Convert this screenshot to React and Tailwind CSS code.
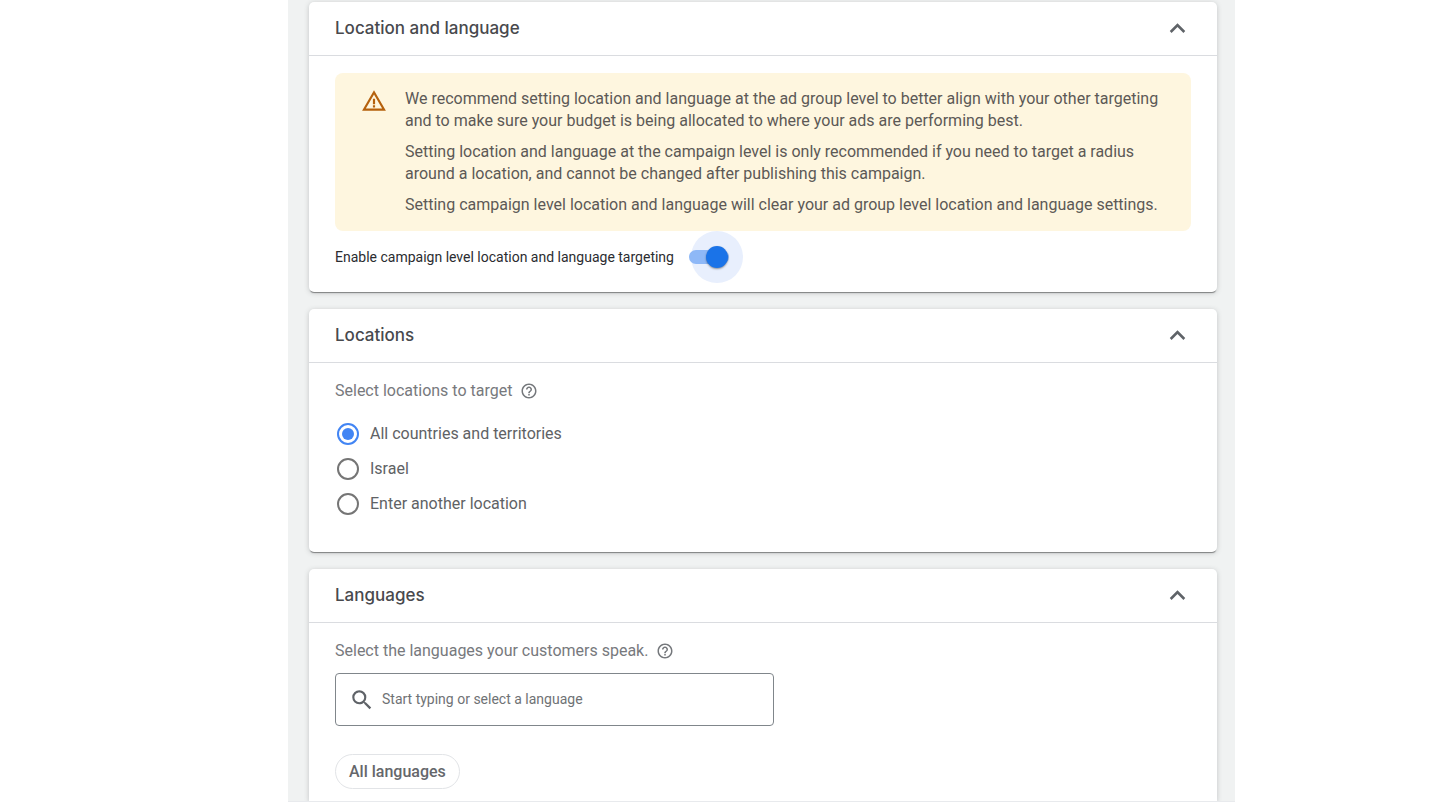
import { useState } from "react";
import { MdHelpOutline, MdKeyboardArrowUp, MdSearch, MdWarningAmber } from "react-icons/md";

const LOCATIONS = [
  { value: "all", label: "All countries and territories" },
  { value: "il", label: "Israel" },
  { value: "other", label: "Enter another location" },
];

function Panel({ title, className = "", children }) {
  const [open, setOpen] = useState(true);

  return (
    <section
      className={`bg-white shadow-[0_2px_1px_-1px_rgba(0,0,0,0.4),0_1px_5px_rgba(60,64,67,0.25)] ${className}`}
    >
      <header className="flex h-[54px] items-center justify-between border-b border-[#dadce0] pr-6 pl-[26px]">
        <h2 className="font-['Inter',sans-serif] text-[17px] font-medium text-[#48494d]">{title}</h2>
        <button type="button" aria-label={`Toggle ${title}`} aria-expanded={open} onClick={() => setOpen(!open)}>
          <MdKeyboardArrowUp className={`size-[31px] text-[#5f6368] ${open ? "" : "rotate-180"}`} />
        </button>
      </header>
      {open && children}
    </section>
  );
}

function HelpButton({ label }) {
  return (
    <button type="button" aria-label={label}>
      <MdHelpOutline className="size-[18px] text-[#75787c]" />
    </button>
  );
}

function TargetingWarning() {
  return (
    <div className="flex gap-[18px] rounded-lg bg-[#fef6df] py-[15px] pr-6 pl-[26px]">
      <MdWarningAmber className="size-[26px] shrink-0 text-[#b5610d]" />
      <div className="space-y-[9px] text-[16px] leading-[22px] text-[#5c5956]">
        <p>
          We recommend setting location and language at the ad group level to better align with your other targeting{" "}
          and to make sure your budget is being allocated to where your ads are performing best.
        </p>
        <p>
          Setting location and language at the campaign level is only recommended if you need to target a radius around
          a location, and cannot be changed after publishing this campaign.
        </p>
        <p>Setting campaign level location and language will clear your ad group level location and language settings.</p>
      </div>
    </div>
  );
}

function TargetingSwitch() {
  const [on, setOn] = useState(true);

  return (
    <label className="flex h-[52px] items-center gap-[15px] text-[14px] text-[#2b2c30]">
      Enable campaign level location and language targeting
      <span className="relative h-[14px] w-10">
        <input
          type="checkbox"
          role="switch"
          checked={on}
          onChange={(e) => setOn(e.target.checked)}
          className="peer absolute inset-0 m-0 cursor-pointer appearance-none"
        />
        {/* halo, track and thumb */}
        <span className="pointer-events-none absolute -top-[19px] left-[2px] size-[52px] rounded-full bg-[#e8effd]" />
        <span className="pointer-events-none absolute inset-0 rounded-full bg-[#bdc1c6] peer-checked:bg-[#8eb8f7]" />
        <span className="pointer-events-none absolute -top-1 left-0 size-[22px] rounded-full bg-white shadow-[0_1px_2px_rgba(0,0,0,0.4)] peer-checked:left-[17px] peer-checked:bg-[#1a73e8]" />
      </span>
    </label>
  );
}

export default function App() {
  const [location, setLocation] = useState("all");
  const [query, setQuery] = useState("");

  return (
    <div className="font-['Roboto',sans-serif]">
      <main className="mr-[200px] ml-72 space-y-[17px] overflow-hidden border-b border-[#e8eaed] bg-[#f0f2f2] pt-[2px] pr-[18px] pl-[21px]">
        <Panel title="Location and language" className="rounded-[5px]">
          <div className="px-[26px] pt-[17px] pb-[9px]">
            <TargetingWarning />
            <TargetingSwitch />
          </div>
        </Panel>

        <Panel title="Locations" className="rounded-[5px]">
          <div className="px-[26px] pt-[17px] pb-[31px]">
            <div className="flex items-center gap-2 text-[16px] leading-[22px] text-[#77797d]">
              <span id="locations-label">Select locations to target</span>
              <HelpButton label="About locations" />
            </div>
            <div role="radiogroup" aria-labelledby="locations-label" className="pt-[14px]">
              {LOCATIONS.map((l) => (
                <label key={l.value} className="flex h-[35px] items-center gap-[11px] pl-[2px] text-[16px] text-[#606265]">
                  <input
                    type="radio"
                    name="location"
                    value={l.value}
                    checked={location === l.value}
                    onChange={() => setLocation(l.value)}
                    className="grid size-[22px] appearance-none place-content-center rounded-full border-2 border-[#757575] before:size-3 before:rounded-full before:content-[''] checked:border-[#4285f4] checked:before:bg-[#4285f4]"
                  />
                  {l.label}
                </label>
              ))}
            </div>
          </div>
        </Panel>

        <Panel title="Languages" className="rounded-t-[5px]">
          <div className="px-[26px] pt-[17px] pb-3">
            <div className="flex items-center gap-2 text-[16px] leading-[22px] text-[#77797d]">
              <label htmlFor="language-search">Select the languages your customers speak.</label>
              <HelpButton label="About languages" />
            </div>
            <div className="mt-[11px] flex h-[53px] max-w-[439px] items-center gap-[7px] rounded-[4px] border border-[#80868b] pr-4 pl-[13px]">
              <MdSearch className="size-[26px] shrink-0 text-[#5f6368]" />
              <input
                id="language-search"
                type="text"
                value={query}
                onChange={(e) => setQuery(e.target.value)}
                placeholder="Start typing or select a language"
                className="min-w-0 flex-1 bg-transparent text-[14px] text-[#3c4043] outline-none placeholder:text-[#6f7275]"
              />
            </div>
            <button
              type="button"
              className="mt-7 h-[35px] rounded-full border border-[#e2e4e7] px-[13px] text-[16px] font-medium text-[#65676b]"
            >
              All languages
            </button>
          </div>
        </Panel>
      </main>
    </div>
  );
}
